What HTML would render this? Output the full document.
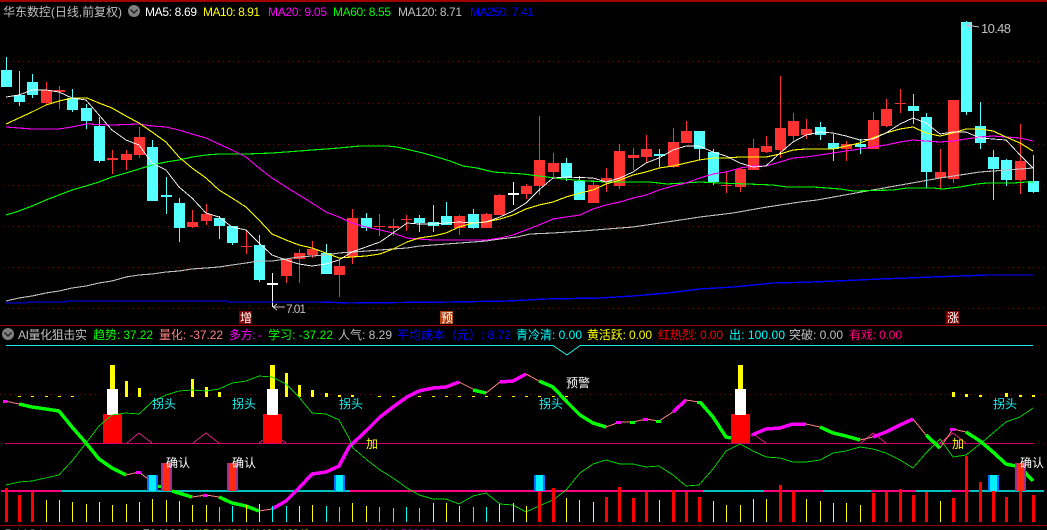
<!DOCTYPE html>
<html><head><meta charset="utf-8"><style>
html,body{margin:0;padding:0;background:#000;width:1047px;height:530px;overflow:hidden}
svg{display:block;position:absolute;left:0;top:0}
text{font-family:"Liberation Sans","WenQuanYi Zen Hei","Noto Sans CJK SC",sans-serif;font-size:12px}
.l{fill:none;shape-rendering:crispEdges}
.r{shape-rendering:crispEdges}
</style></head><body>
<svg width="1047" height="530" viewBox="0 0 1047 530">
<rect width="1047" height="530" fill="#000"/>
<g class="r" fill="#a00000">
<rect x="0" y="0" width="1047" height="2"/>
<rect x="0" y="325" width="1047" height="1"/>
<rect x="0" y="525" width="1047" height="1"/>
</g>
<path class="l" stroke="#800000" stroke-dasharray="1 4" d="M3 61.5H1047M3 103.5H1047M3 144.5H1047M3 185.5H1047M3 226.5H1047M3 267.5H1047M3 308.5H1047M0 394.5H1047"/>

<!-- candles -->
<path class="l" stroke="#ff3232" d="M46.5 82V105M59.5 86V109M112.5 150V174M126.5 150V170M139.5 127V158M192.5 210V228M206.5 204V225M246.5 230V254M286.5 259V283M299.5 249V283M312.5 241V258M339.5 260V297M352.5 209V264M379.5 214V236M393.5 219V236M406.5 215V231M459.5 215V235M486.5 213V228M499.5 194V215M526.5 184V199M539.5 116V195M553.5 153V177M593.5 180V203M606.5 168V192M619.5 144V189M633.5 148V170M646.5 135V163M673.5 128V168M686.5 121V143M726.5 171V193M740.5 168V192M753.5 139V170M766.5 136V153M780.5 76V158M793.5 113V141M806.5 119V139M846.5 141V161M873.5 112V149M886.5 99V127M900.5 89V113M940.5 149V188M953.5 100V183M1020.5 124V194"/>
<path class="r" fill="#ff3232" d="M41 90h11v13H41zM54 90h11v2H54zM107 158h11v2h-11zM121 154h11v6h-11zM134 137h11v18h-11zM187 222h11v5h-11zM201 214h11v7h-11zM241 246h11v1h-11zM281 259h11v17h-11zM294 253h11v6h-11zM307 249h11v6h-11zM334 266h11v9h-11zM347 218h11v39h-11zM374 226h11v1h-11zM388 226h11v2h-11zM401 219h11v1h-11zM454 216h11v12h-11zM481 214h11v14h-11zM494 195h11v20h-11zM521 186h11v8h-11zM534 160h11v26h-11zM548 163h11v9h-11zM588 185h11v18h-11zM601 178h11v4h-11zM614 151h11v35h-11zM628 155h11v3h-11zM641 149h11v8h-11zM668 142h11v25h-11zM681 131h11v12h-11zM721 185h11v1h-11zM735 169h11v18h-11zM748 148h11v22h-11zM761 146h11v6h-11zM775 128h11v22h-11zM788 121h11v15h-11zM801 129h11v6h-11zM841 144h11v5h-11zM868 120h11v29h-11zM881 109h11v17h-11zM895 103h11v1h-11zM935 172h11v6h-11zM948 100h11v79h-11zM1015 161h11v19h-11z"/>
<path class="l" stroke="#54ffff" d="M6.5 57V87M19.5 71V106M32.5 74V98M72.5 89V112M86.5 104V129M99.5 117V163M152.5 140V201M166.5 177V214M179.5 198V242M219.5 216V239M232.5 226V245M259.5 235V282M326.5 244V274M366.5 213V231M419.5 215V232M433.5 205V232M446.5 202V225M473.5 209V229M566.5 158V181M579.5 176V200M659.5 149V167M699.5 131V160M713.5 149V185M820.5 122V140M833.5 134V161M860.5 139V154M913.5 94V124M926.5 113V188M966.5 21V115M980.5 102V149M993.5 150V200M1006.5 159V186M1033.5 155V193"/>
<path class="r" fill="#54ffff" d="M1 70h11v17H1zM14 95h11v7H14zM27 82h11v13H27zM67 98h11v12H67zM81 108h11v13H81zM94 126h11v35H94zM147 147h11v54h-11zM161 195h11v2h-11zM174 203h11v25h-11zM214 218h11v8h-11zM227 226h11v17h-11zM254 245h11v35h-11zM321 253h11v21h-11zM361 218h11v10h-11zM414 218h11v5h-11zM428 222h11v4h-11zM441 216h11v9h-11zM468 214h11v14h-11zM561 163h11v15h-11zM574 181h11v19h-11zM654 154h11v2h-11zM694 131h11v18h-11zM708 152h11v30h-11zM815 127h11v8h-11zM828 143h11v6h-11zM855 144h11v3h-11zM908 106h11v5h-11zM921 117h11v55h-11zM961 22h11v90h-11zM975 126h11v17h-11zM988 157h11v12h-11zM1001 160h11v20h-11zM1028 181h11v11h-11z"/>
<path class="l" stroke="#fff" d="M272.5 273V307M513.5 182V205"/>
<path class="r" fill="#fff" d="M267 283h11v2h-11zM508 193h11v2h-11z"/>

<!-- moving averages -->
<polyline class="l" stroke="#0000ff" stroke-width="1.4" points="6,303 26,303 26,302 66,302 66,301 227,301 227,302 320,302 350,303 450,302 507,301 547,299 600,298 633,296 667,293 700,289 733,287 773,283 813,282 880,279 933,277 987,275 1033,275"/>
<polyline class="l" stroke="#c0c0c0" stroke-width="1.1" points="6,301 19,298 32,296 46,293 59,291 72,288 86,286 99,283 112,281 126,277 139,275 152,274 166,272 179,271 192,269 206,268 219,267 232,265 246,263 259,261 272,261 286,259 299,257 312,256 326,255 339,253 353,252 380,250 393,249 407,248 420,246 433,245 460,243 486,241 500,239 517,237 530,234 553,233 583,231 607,229 633,227 667,222 700,217 733,213 767,207 800,202 817,200 867,191 940,178 980,172 1033,168"/>
<polyline class="l" stroke="#00ff00" stroke-width="1.1" points="6,215 19,211 32,206 46,200 59,195 72,190 86,186 99,182 112,177 126,173 139,169 152,165 166,162 179,160 192,157 206,155 219,154 246,154 272,153 286,152 299,151 312,150 326,149 339,148 349,147 360,146 387,146 397,147 410,150 423,153 437,157 450,161 463,166 477,168 493,172 523,174 547,177 563,179 587,181 607,182 650,182 667,184 700,182 720,183 747,184 773,185 787,187 813,187 827,188 840,189 853,191 893,190 907,188 933,188 943,189 960,187 977,184 987,183 1013,183 1027,182 1033,182"/>
<polyline class="l" stroke="#ff00ff" stroke-width="1.1" points="6,127 19,128 32,129 59,129 72,127 86,124 112,125 139,124 152,126 166,127 179,130 192,134 206,138 219,144 232,150 246,157 259,168 272,178 286,187 299,195 312,203 326,212 339,217 352,223 366,227 380,230 393,233 407,238 419,239 433,240 486,240 500,238 513,235 526,230 539,225 553,219 566,217 580,215 593,209 606,205 620,202 633,198 646,195 659,190 673,186 686,183 700,178 713,174 726,172 740,168 753,166 766,166 780,162 793,158 806,157 820,155 833,153 846,151 860,149 873,147 886,145 900,142 913,140 926,141 940,142 953,141 966,139 980,137 993,136 1006,137 1020,138 1033,141"/>
<polyline class="l" stroke="#ffff00" stroke-width="1.1" points="6,124 19,118 32,112 46,105 59,101 72,98 87,98 99,103 112,108 126,116 139,123 152,132 166,142 179,157 192,168 206,178 219,190 232,198 246,207 259,220 272,234 286,240 299,245 312,248 326,253 339,258 352,257 366,256 380,254 393,249 407,242 419,238 433,236 446,233 459,227 473,223 486,222 500,219 513,215 526,209 539,205 553,202 566,197 580,193 593,190 606,184 620,180 633,175 646,172 659,168 673,166 699,160 713,158 726,158 740,157 766,157 780,154 793,150 806,149 833,149 846,146 860,143 873,138 886,133 900,129 913,127 926,133 940,136 953,133 966,129 980,129 993,131 1006,137 1020,143 1033,151"/>
<polyline class="l" stroke="#fff" stroke-width="0.9" points="6,97 19,95 32,90 46,90 59,92 72,98 86,100 99,115 112,130 126,140 139,145 152,163 166,170 179,187 192,198 206,213 219,217 232,227 246,230 259,243 272,255 286,260 299,264 312,266 326,264 339,260 352,252 366,247 380,242 393,233 407,223 419,224 433,224 446,223 459,222 473,223 486,222 500,217 513,211 526,203 539,190 553,178 566,177 593,178 606,182 620,178 633,172 646,163 659,158 673,150 686,146 699,146 713,152 726,156 740,163 753,167 766,166 780,153 793,142 806,135 820,132 833,133 846,136 860,140 873,139 886,133 900,124 913,118 926,123 940,134 953,132 966,132 980,138 993,139 1006,140 1020,155 1033,168"/>

<!-- price labels -->
<path class="l" stroke="#c0c0c0" d="M966 25L972 22M966 25L972 28M966 25L979 27M273 307H285M273 307L277 304M273 307L277 310"/>
<text x="981" y="33" fill="#c0c0c0" textLength="30" style="font-size:13px">10.48</text>
<text x="286" y="313" fill="#c0c0c0" textLength="20">7.01</text>
<rect class="r" x="239" y="311" width="13" height="13" fill="#800000"/>
<rect class="r" x="440" y="311" width="13" height="13" fill="#b04010"/>
<rect class="r" x="946" y="311" width="13" height="13" fill="#800000"/>
<text x="240" y="322" fill="#fff">增</text>
<text x="441" y="322" fill="#fff">预</text>
<text x="947" y="322" fill="#fff">涨</text>

<!-- top header -->
<text x="3" y="16" fill="#c0c0c0" textLength="119">华东数控(日线,前复权)</text>
<circle cx="134" cy="11" r="6" fill="#808080"/>
<path d="M130.500 9.500L134 13L137.500 9.500" fill="none" stroke="#222" stroke-width="1.400"/>
<text x="145" y="16" fill="#fff" textLength="52">MA5: 8.69</text>
<text x="203" y="16" fill="#ffff00" textLength="57">MA10: 8.91</text>
<text x="268" y="16" fill="#ff00ff" textLength="59">MA20: 9.05</text>
<text x="333" y="16" fill="#00ff00" textLength="58">MA60: 8.55</text>
<text x="398" y="16" fill="#c0c0c0" textLength="64">MA120: 8.71</text>
<text x="470" y="16" fill="#0000ff" textLength="64">MA250: 7.41</text>

<!-- lower header -->
<circle cx="8" cy="334" r="6" fill="#808080"/>
<path d="M4.500 332.500L8 336L11.500 332.500" fill="none" stroke="#222" stroke-width="1.400"/>
<text x="18" y="339" fill="#c0c0c0" textLength="69">AI量化狙击实</text>
<text x="93" y="339" fill="#00ff00" textLength="60">趋势: 37.22</text>
<text x="159" y="339" fill="#ff8080" textLength="64">量化: -37.22</text>
<text x="229" y="339" fill="#ff00ff" textLength="33">多方: -</text>
<text x="268" y="339" fill="#00ff00" textLength="65">学习: -37.22</text>
<text x="338" y="339" fill="#c0c0c0" textLength="54">人气: 8.29</text>
<text x="397" y="339" fill="#0000ff" textLength="114">平均成本（元）: 8.72</text>
<text x="516" y="339" fill="#00ffff" textLength="66">青冷清: 0.00</text>
<text x="587" y="339" fill="#ffff00" textLength="65">黄活跃: 0.00</text>
<text x="658" y="339" fill="#ff0000" textLength="65">红热烈: 0.00</text>
<text x="729" y="339" fill="#00ffff" textLength="56">出: 100.00</text>
<text x="789" y="339" fill="#c0c0c0" textLength="54">突破: 0.00</text>
<text x="849" y="339" fill="#ff0080" textLength="53">有戏: 0.00</text>

<!-- indicator pane lines -->
<polyline class="l" stroke="#20e8e8" points="6,345.500 553,345.500 567,355 580,345.500 1033,345.500"/>
<path class="l" stroke="#d00070" d="M5 443.500H1033"/>
<path class="l" stroke="#800000" stroke-dasharray="1 4" d="M1 443.500H5M1034 443.500H1047"/>
<path class="l" stroke="#d8207c" d="M127 443L139 433L152 443M193 443L206 433L219 443M259 443L272 433L286 443M740 443L753 434L766 443M861 443L873 433L886 443M940 443L953 433L966 443"/>

<!-- base line -->
<g class="r">
<rect x="1" y="490" width="61" height="2" fill="#ff0080"/>
<rect x="62" y="490" width="288" height="2" fill="#00c0c0"/>
<rect x="350" y="490" width="353" height="2" fill="#ff0080"/>
<rect x="703" y="490" width="61" height="2" fill="#00c0c0"/>
<rect x="764" y="490" width="59" height="2" fill="#ff0080"/>
<rect x="823" y="490" width="48" height="2" fill="#00c0c0"/>
<rect x="871" y="490" width="45" height="2" fill="#ff0080"/>
<rect x="916" y="490" width="35" height="2" fill="#00c0c0"/>
<rect x="951" y="490" width="19" height="2" fill="#ff0080"/>
<rect x="970" y="490" width="74" height="2" fill="#00c0c0"/>
</g>

<!-- signal stacks -->
<g class="r">
<rect x="103" y="414" width="19" height="29" fill="#ff0000"/><rect x="107" y="389" width="11" height="26" fill="#fff"/><rect x="110" y="365" width="5" height="24" fill="#ffff00"/>
<rect x="263" y="414" width="19" height="29" fill="#ff0000"/><rect x="267" y="389" width="11" height="26" fill="#fff"/><rect x="270" y="365" width="5" height="24" fill="#ffff00"/>
<rect x="731" y="414" width="19" height="29" fill="#ff0000"/><rect x="735" y="389" width="11" height="26" fill="#fff"/><rect x="738" y="365" width="5" height="24" fill="#ffff00"/>
</g>
<path class="r" fill="#ffff00" d="M125 381h3v16h-3zM138 388h3v9h-3zM191 379h3v18h-3zM205 387h3v10h-3zM218 392h3v5h-3zM285 373h3v24h-3zM298 385h3v12h-3zM311 390h3v7h-3zM325 393h3v4h-3zM338 395h3v2h-3zM351 395h3v2h-3zM952 392h3v5h-3zM965 394h3v3h-3zM979 395h3v2h-3zM1005 393h3v4h-3zM1019 395h3v2h-3zM1032 395h3v2h-3z"/>
<path class="r" fill="#ffff00" d="M18 396h3v1h-3zM31 396h3v1h-3zM45 396h3v1h-3zM58 396h3v1h-3zM71 396h3v1h-3zM378 396h3v1h-3zM392 396h3v1h-3zM405 396h3v1h-3zM418 396h3v1h-3zM432 396h3v1h-3zM445 396h3v1h-3zM458 396h3v1h-3zM472 396h3v1h-3zM485 396h3v1h-3zM498 396h3v1h-3zM512 396h3v1h-3zM525 396h3v1h-3zM538 396h3v1h-3zM552 396h3v1h-3zM565 396h3v1h-3z"/>

<!-- main trend line -->
<polyline class="l" stroke="#ff8080" points="5,401 19,404"/>
<polyline class="l" stroke="#ff8080" points="126,475 139,472 153,483 172,491"/>
<polyline class="l" stroke="#ff8080" points="192,497 206,495 219,497"/>
<polyline class="l" stroke="#ff8080" points="259,511 272,509"/>
<polyline class="l" stroke="#ff8080" points="459,382 473,389"/>
<polyline class="l" stroke="#ff8080" points="486,393 500,382"/>
<polyline class="l" stroke="#ff8080" points="526,374 539,381"/>
<polyline class="l" stroke="#ff8080" points="606,427 620,422 633,422 646,419 659,421 673,412"/>
<polyline class="l" stroke="#ff8080" points="686,400 699,402"/>
<polyline class="l" stroke="#ff8080" points="806,424 820,427"/>
<polyline class="l" stroke="#ff8080" points="860,440 873,437"/>
<polyline class="l" stroke="#ff8080" points="913,419 926,435"/>
<polyline class="l" stroke="#ff8080" points="940,448 953,429 966,432"/>
<g class="l" stroke="#00ff00" stroke-width="3.5">
<polyline points="19,404 32,407 46,409 59,411 72,427 86,443 99,459 112,468 126,475"/>
<polyline points="172,491 192,497"/>
<polyline points="219,497 232,503 246,506 259,511"/>
<polyline points="473,390 486,393"/>
<polyline points="539,381 553,387 567,402 580,415 593,423 606,427"/>
<polyline points="700,402 713,417 726,437 731,438"/>
<polyline points="820,427 833,433 846,436 860,440"/>
<polyline points="926,435 940,448"/>
<polyline points="966,432 980,441 993,452 1006,464 1020,467 1033,481"/>
</g>
<g class="l" stroke="#ff00ff" stroke-width="3.5">
<polyline points="272,509 286,501 299,488 312,474 326,472 339,466 349,447 367,430 380,417 393,407 407,397 419,391 433,388 446,387 459,382"/>
<polyline points="500,382 513,381 526,374"/>
<polyline points="673,412 686,400"/>
<polyline points="752,435 766,429 780,428 793,424 806,424"/>
<polyline points="873,437 886,432 900,425 913,419"/>
</g>
<path class="r" fill="#ff00ff" d="M3 400h4v3H3zM136 471h5v3h-5zM203 494h4v3h-4zM616 421h5v3h-5zM643 418h5v3h-5zM950 428h5v3h-5z"/>
<path class="r" fill="#00ff00" d="M158 485h4v3h-4zM630 421h5v3h-5zM656 420h5v3h-5zM697 401h5v3h-5z"/>

<!-- thin green oscillator -->
<polyline class="l" stroke="#00e000" stroke-width="0.9" points="6,485 19,482 32,481 59,475 72,461 86,443 99,426 112,415 126,413 139,414 152,402 166,395 179,391 192,390 206,391 219,389 232,383 246,381 259,376 272,377 286,384 299,397 312,413 326,414 339,420 349,438 353,448 367,460 380,470 393,478 407,488 419,495 433,499 446,499 459,504 473,496 486,493 500,504 513,505 526,512 539,506 553,500 566,490 580,473 593,464 606,460 620,464 633,464 646,467 659,466 673,475 686,486 699,485 713,469 726,451 740,444 753,451 766,457 780,458 793,462 806,462 820,460 833,453 846,451 860,447 873,449 886,453 900,460 913,468 926,453 940,439 953,457 966,455 980,444 993,433 1006,422 1020,417 1033,408"/>

<!-- bars -->
<path class="l" stroke="#ffff00" d="M46.500 500V522M59.500 500V522M72.500 502V522M86.500 504V522M99.500 502V522M112.500 505V522M126.500 504V522M139.500 502V522M152.500 499V522M166.500 500V522M179.500 501V522M192.500 505V522M206.500 505V522M246.500 505V522M259.500 504V522M299.500 506V522M312.500 505V522M352.500 503V522M366.500 506V522M433.500 503V522M446.500 503V522M459.500 506V522M499.500 504V522M513.500 503V522M526.500 506V522M566.500 498V522M579.500 500V522M593.500 502V522M659.500 500V522M713.500 501V522M726.500 505V522M740.500 505V522M753.500 499V522M766.500 499V522M806.500 499V522M820.500 501V522M833.500 503V522M846.500 503V522M860.500 505V522M940.500 501V522"/>
<path class="l" stroke="#00ffff" d="M219.500 507V522M232.500 506V522M272.500 506V522M286.500 506V522M326.500 506V522M339.500 507V522M379.500 507V522M393.500 508V522M406.500 507V522M419.500 508V522M473.500 507V522M486.500 507V522"/>
<path class="r" fill="#ff0000" d="M5 488h3v34H5zM18 495h3v27h-3zM31 492h3v30h-3zM538 492h3v30h-3zM552 488h3v34h-3zM605 497h3v25h-3zM618 487h3v35h-3zM632 498h3v24h-3zM645 492h3v30h-3zM672 490h3v32h-3zM685 492h3v30h-3zM698 497h3v25h-3zM779 485h3v37h-3zM792 491h3v31h-3zM872 493h3v29h-3zM885 492h3v30h-3zM899 489h3v33h-3zM912 495h3v27h-3zM925 492h3v30h-3zM952 498h3v24h-3zM965 456h3v66h-3zM979 482h3v40h-3zM992 491h3v31h-3zM1005 497h3v25h-3zM1019 491h3v31h-3zM1032 495h3v27h-3z"/>

<!-- boxes -->
<g class="r">
<rect x="147" y="475" width="11" height="16" fill="#0070ff"/><rect x="149" y="475" width="7" height="16" fill="#00f0ff"/>
<rect x="334" y="475" width="11" height="16" fill="#0070ff"/><rect x="336" y="475" width="7" height="16" fill="#00f0ff"/>
<rect x="534" y="475" width="11" height="16" fill="#0070ff"/><rect x="536" y="475" width="7" height="16" fill="#00f0ff"/>
<rect x="988" y="475" width="11" height="16" fill="#0070ff"/><rect x="990" y="475" width="7" height="16" fill="#00f0ff"/>
<rect x="161" y="463" width="11" height="28" fill="#a03090"/><rect x="163" y="463" width="7" height="28" fill="#ff2a10"/>
<rect x="227" y="463" width="11" height="28" fill="#a03090"/><rect x="229" y="463" width="7" height="28" fill="#ff2a10"/>
<rect x="1015" y="463" width="11" height="28" fill="#a03090"/><rect x="1017" y="463" width="7" height="28" fill="#ff2a10"/>
</g>

<!-- signal text -->
<text x="152" y="408" fill="#20f0f0">拐头</text>
<text x="232" y="408" fill="#20f0f0">拐头</text>
<text x="339" y="408" fill="#20f0f0">拐头</text>
<text x="539" y="408" fill="#20f0f0">拐头</text>
<text x="993" y="408" fill="#20f0f0">拐头</text>
<text x="166" y="467" fill="#fff">确认</text>
<text x="232" y="467" fill="#fff">确认</text>
<text x="1020" y="467" fill="#fff">确认</text>
<text x="566" y="387" fill="#fff">预警</text>
<text x="366" y="448" fill="#ffff00">加</text>
<text x="952" y="448" fill="#ffff00">加</text>

<!-- clipped row at the bottom -->
<circle cx="8" cy="535" r="6" fill="#808080"/>
<text x="18" y="538" fill="#c0c0c0" textLength="28">VOL</text>
<text x="143" y="538" fill="#fff" textLength="40">724938</text>
<text x="188" y="538" fill="#ffff00" textLength="55">MA5: 624938</text>
<text x="245" y="538" fill="#ffff00" textLength="65">MA10: 613240</text>
<text x="367" y="538" fill="#ff00ff" textLength="70">MA20: 588888</text>
</svg>
</body></html>
